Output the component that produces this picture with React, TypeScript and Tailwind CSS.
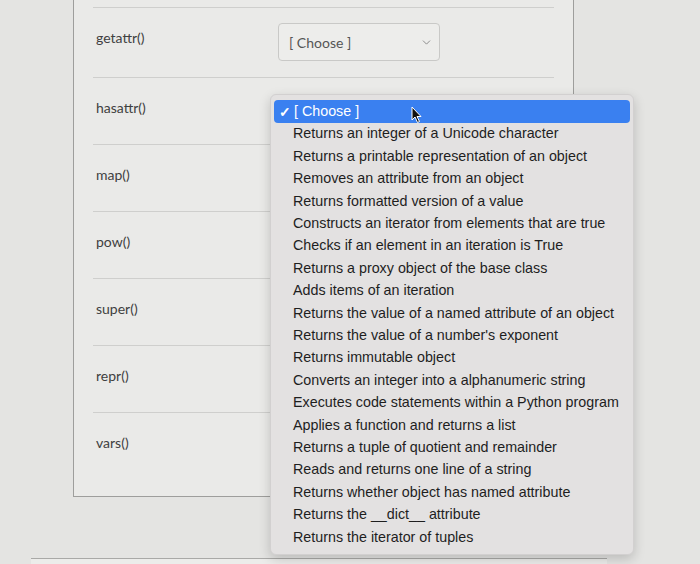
import { ChevronDown } from "lucide-react";

const rows = ["getattr()", "hasattr()", "map()", "pow()", "super()", "repr()", "vars()"];

const options = [
  "Returns an integer of a Unicode character",
  "Returns a printable representation of an object",
  "Removes an attribute from an object",
  "Returns formatted version of a value",
  "Constructs an iterator from elements that are true",
  "Checks if an element in an iteration is True",
  "Returns a proxy object of the base class",
  "Adds items of an iteration",
  "Returns the value of a named attribute of an object",
  "Returns the value of a number's exponent",
  "Returns immutable object",
  "Converts an integer into a alphanumeric string",
  "Executes code statements within a Python program",
  "Applies a function and returns a list",
  "Returns a tuple of quotient and remainder",
  "Reads and returns one line of a string",
  "Returns whether object has named attribute",
  "Returns the __dict__ attribute",
  "Returns the iterator of tuples",
];

function Select() {
  return (
    <div className="flex h-[38px] w-[162px] items-center justify-between rounded-[4px] border border-[#c9c9c7] bg-[#ededeb] pl-[10px] pr-[6px] text-[14px] text-[#555]">
      <span>[ Choose ]</span>
      <ChevronDown size={13} strokeWidth={1.5} className="text-[#777]" />
    </div>
  );
}

export default function App() {
  return (
    <div
      className="relative h-[564px] w-[700px] overflow-hidden bg-[#e4e4e2]"
      style={{ fontFamily: "Lato, 'Noto Sans', sans-serif" }}
    >
      <div className="ml-[73px] w-[501px] border-x border-b border-[#9e9e9c] bg-[#eaeae8] px-[19px] pt-[7px]">
        {rows.map((label, i) => (
          <div
            key={label}
            className={
              "flex border-t border-[#cfcfcd] " +
              (i === 0 ? "h-[70px]" : i === rows.length - 1 ? "h-[84px]" : "h-[67px]")
            }
          >
            <div className="w-[185px] pl-[3px] pt-[19px] text-[14px] text-[#404040]">{label}</div>
            {i === 0 && (
              <div className="pt-[15px]">
                <Select />
              </div>
            )}
          </div>
        ))}
      </div>

      <div className="mx-[31px] mt-[61px] h-[20px] w-[576px] border-t border-[#a9a9a7] bg-[#ececea]" />

      <div
        className="absolute left-[270px] top-[94px] w-[364px] rounded-[6px] border border-[#d2d0d0] bg-[#e3e1e1] px-[3px] pb-[6px] pt-[5px] text-[14.3px] text-[#1e1e1e] shadow-[0_4px_12px_rgba(0,0,0,0.18)]"
        style={{ fontFamily: "'Liberation Sans', Arial, sans-serif" }}
      >
        <div className="relative flex h-[23px] items-center rounded-[4px] bg-[#3a80f0] pl-[20px] text-[14.3px] text-white">
          <span className="absolute left-[5px] top-[2px] text-[14px] font-bold">✓</span>
          <span>[ Choose ]</span>
          <svg
            className="absolute left-[137px] top-[6px]"
            width="12"
            height="18"
            viewBox="0 0 12 18"
          >
            <path
              d="M1 1 L1 14 L4 11 L6.5 16.5 L8.5 15.5 L6 10.5 L10 10.5 Z"
              fill="#111"
              stroke="#fff"
              strokeWidth="1"
              strokeLinejoin="round"
            />
          </svg>
        </div>
        {options.map((o) => (
          <div key={o} className="flex h-[22.4px] items-center pl-[19px]">
            {o}
          </div>
        ))}
      </div>
    </div>
  );
}
